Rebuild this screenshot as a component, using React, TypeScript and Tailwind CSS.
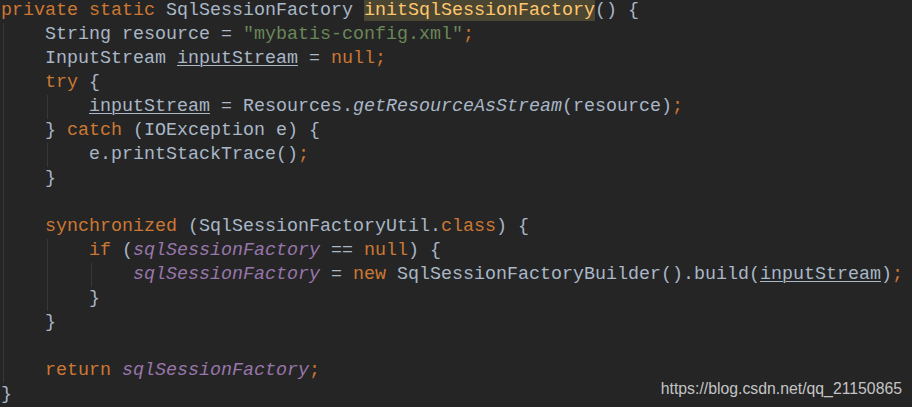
import type { ReactNode } from "react";

const Kw = ({ children }: { children: ReactNode }) => (
  <span className="text-[#cc7832]">{children}</span>
);
const Str = ({ children }: { children: ReactNode }) => (
  <span className="text-[#6a8759]">{children}</span>
);
const Field = ({ children }: { children: ReactNode }) => (
  <span className="italic text-[#9876aa]">{children}</span>
);
const Reassigned = ({ children }: { children: ReactNode }) => (
  <span className="underline decoration-[#a9b7c6] decoration-1 underline-offset-2">
    {children}
  </span>
);

function Line({ children }: { children?: ReactNode }) {
  return <div className="h-6 whitespace-pre">{children}</div>;
}

// indent guide: 4 columns (44px) per level, guide drawn 2px into the column
function Block({ children }: { children: ReactNode }) {
  return (
    <div className="ml-[2px] border-l border-[#383838] pl-[41px]">{children}</div>
  );
}

export default function App() {
  return (
    <div className="relative h-[407px] w-[912px] overflow-hidden bg-[#252526]">
      <div className="-mt-px pl-px font-['Liberation_Mono',monospace] text-[18.33px] leading-6 text-[#a9b7c6]">
        <Line>
          <Kw>private static </Kw>SqlSessionFactory{" "}
          <span className="bg-[#4b4632] text-[#ffc66d]">initSqlSessionFactory</span>() {"{"}
        </Line>
        <Block>
          <Line>
            String resource = <Str>"mybatis-config.xml"</Str>
            <Kw>;</Kw>
          </Line>
          <Line>
            InputStream <Reassigned>inputStream</Reassigned> = <Kw>null;</Kw>
          </Line>
          <Line>
            <Kw>try </Kw>
            {"{"}
          </Line>
          <Block>
            <Line>
              <Reassigned>inputStream</Reassigned> = Resources.
              <span className="italic">getResourceAsStream</span>(resource)<Kw>;</Kw>
            </Line>
          </Block>
          <Line>
            {"} "}
            <Kw>catch </Kw>(IOException e) {"{"}
          </Line>
          <Block>
            <Line>
              e.printStackTrace()<Kw>;</Kw>
            </Line>
          </Block>
          <Line>{"}"}</Line>
          <Line />
          <Line>
            <Kw>synchronized </Kw>(SqlSessionFactoryUtil.<Kw>class</Kw>) {"{"}
          </Line>
          <Block>
            <Line>
              <Kw>if </Kw>(<Field>sqlSessionFactory</Field> == <Kw>null</Kw>) {"{"}
            </Line>
            <Block>
              <Line>
                <Field>sqlSessionFactory</Field> = <Kw>new </Kw>
                SqlSessionFactoryBuilder().build(<Reassigned>inputStream</Reassigned>)
                <Kw>;</Kw>
              </Line>
            </Block>
            <Line>{"}"}</Line>
          </Block>
          <Line>{"}"}</Line>
          <Line />
          <Line>
            <Kw>return </Kw>
            <Field>sqlSessionFactory</Field>
            <Kw>;</Kw>
          </Line>
        </Block>
        <Line>{"}"}</Line>
      </div>

      <div className="absolute bottom-[10px] right-[10px] font-['Liberation_Sans',Arial,sans-serif] text-[15.8px] leading-none text-[#c4c4c4]">
        https://blog.csdn.net/qq_21150865
      </div>
    </div>
  );
}
